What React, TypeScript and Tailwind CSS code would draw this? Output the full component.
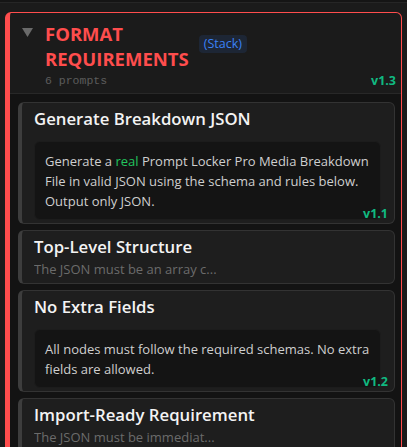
import React from "react";

type Prompt = {
    title: string;
    body: React.ReactNode;
    expanded: boolean;
    version?: string;
};

const prompts: Prompt[] = [
    {
        title: "Generate Breakdown JSON",
        body: (
            <>
                Generate a <span className="text-[#22c55e]">real</span> Prompt Locker Pro Media Breakdown File in valid JSON using the schema and rules below. Output only JSON.
            </>
        ),
        expanded: true,
        version: "v1.1",
    },
    {
        title: "Top-Level Structure",
        body: "The JSON must be an array c...",
        expanded: false,
    },
    {
        title: "No Extra Fields",
        body: "All nodes must follow the required schemas. No extra fields are allowed.",
        expanded: true,
        version: "v1.2",
    },
    {
        title: "Import-Ready Requirement",
        body: "The JSON must be immediat...",
        expanded: false,
    },
];

function PromptCard({ prompt }: { prompt: Prompt }) {
    return (
        <div className="relative rounded-md border border-[#333] border-l-4 border-l-[#3d3d3d] bg-[#1e1e1e] pl-[12px] pr-[13px] pt-[4px] pb-[3px]">
            <h4 className="text-[16.75px] font-semibold leading-6 text-[#f3f3f3]">{prompt.title}</h4>
            {prompt.expanded ? (
                <div className="mt-[10px] rounded-md border border-[#1c1c1c] bg-[#141414] px-[10px] pb-2 pt-[9px] text-[13px] leading-5 text-[#cfcfcf]">
                    {prompt.body}
                </div>
            ) : (
                <p className="truncate pb-px text-[13px] leading-5 text-[#6b6b6b]">{prompt.body}</p>
            )}
            {prompt.version && (
                <span className="absolute bottom-[1px] right-[6px] text-[12.5px] font-bold leading-4 text-[#10b981]">
                    {prompt.version}
                </span>
            )}
        </div>
    );
}

export default function App() {
    return (
        <div className="h-[447px] w-[407px] overflow-hidden bg-[#1b1b1b] font-['Open_Sans',sans-serif]">
            {/* strip of the parent panel above */}
            <div className="h-[3px] border-b border-[#262626] bg-[#151515]" />

            <div className="px-[5px] pt-[9px]">
                <section className="relative overflow-hidden rounded-t-md border border-l-[5px] border-[#ff4d4d] bg-[#1b1b1b]">
                    <div className="relative border-b border-[#282828] pb-[4px] pl-3 pr-2 pt-[8px]">
                        <div className="flex items-start">
                            <svg width="11" height="9" viewBox="0 0 11 9" className="mr-3 mt-[7px] shrink-0">
                                <path d="M0 0 H11 L5.5 9 Z" fill="#6a6a6a" />
                            </svg>
                            <h3 className="w-min text-[18.5px] font-bold uppercase leading-[25px] text-[#ff4d4d]">
                                Format Requirements
                            </h3>
                            <span className="ml-[10px] mt-[14px] rounded bg-[#1d2635] px-[5px] py-px text-[12.5px] leading-4 text-[#3b82f6]">
                                (Stack)
                            </span>
                        </div>
                        <p className="mt-[2px] pl-[23px] font-['Liberation_Mono',monospace] text-[11.5px] leading-4 text-[#5c5c5c]">
                            6 prompts
                        </p>
                        <span className="absolute bottom-[4px] right-[5px] text-[12.5px] font-bold leading-4 text-[#10b981]">
                            v1.3
                        </span>
                    </div>

                    <div className="flex flex-col gap-1.5 bg-[#131313] pb-4 pl-2 pr-1.5 pt-2">
                        {prompts.map((p) => (
                            <PromptCard key={p.title} prompt={p} />
                        ))}
                    </div>
                </section>
            </div>
        </div>
    );
}
